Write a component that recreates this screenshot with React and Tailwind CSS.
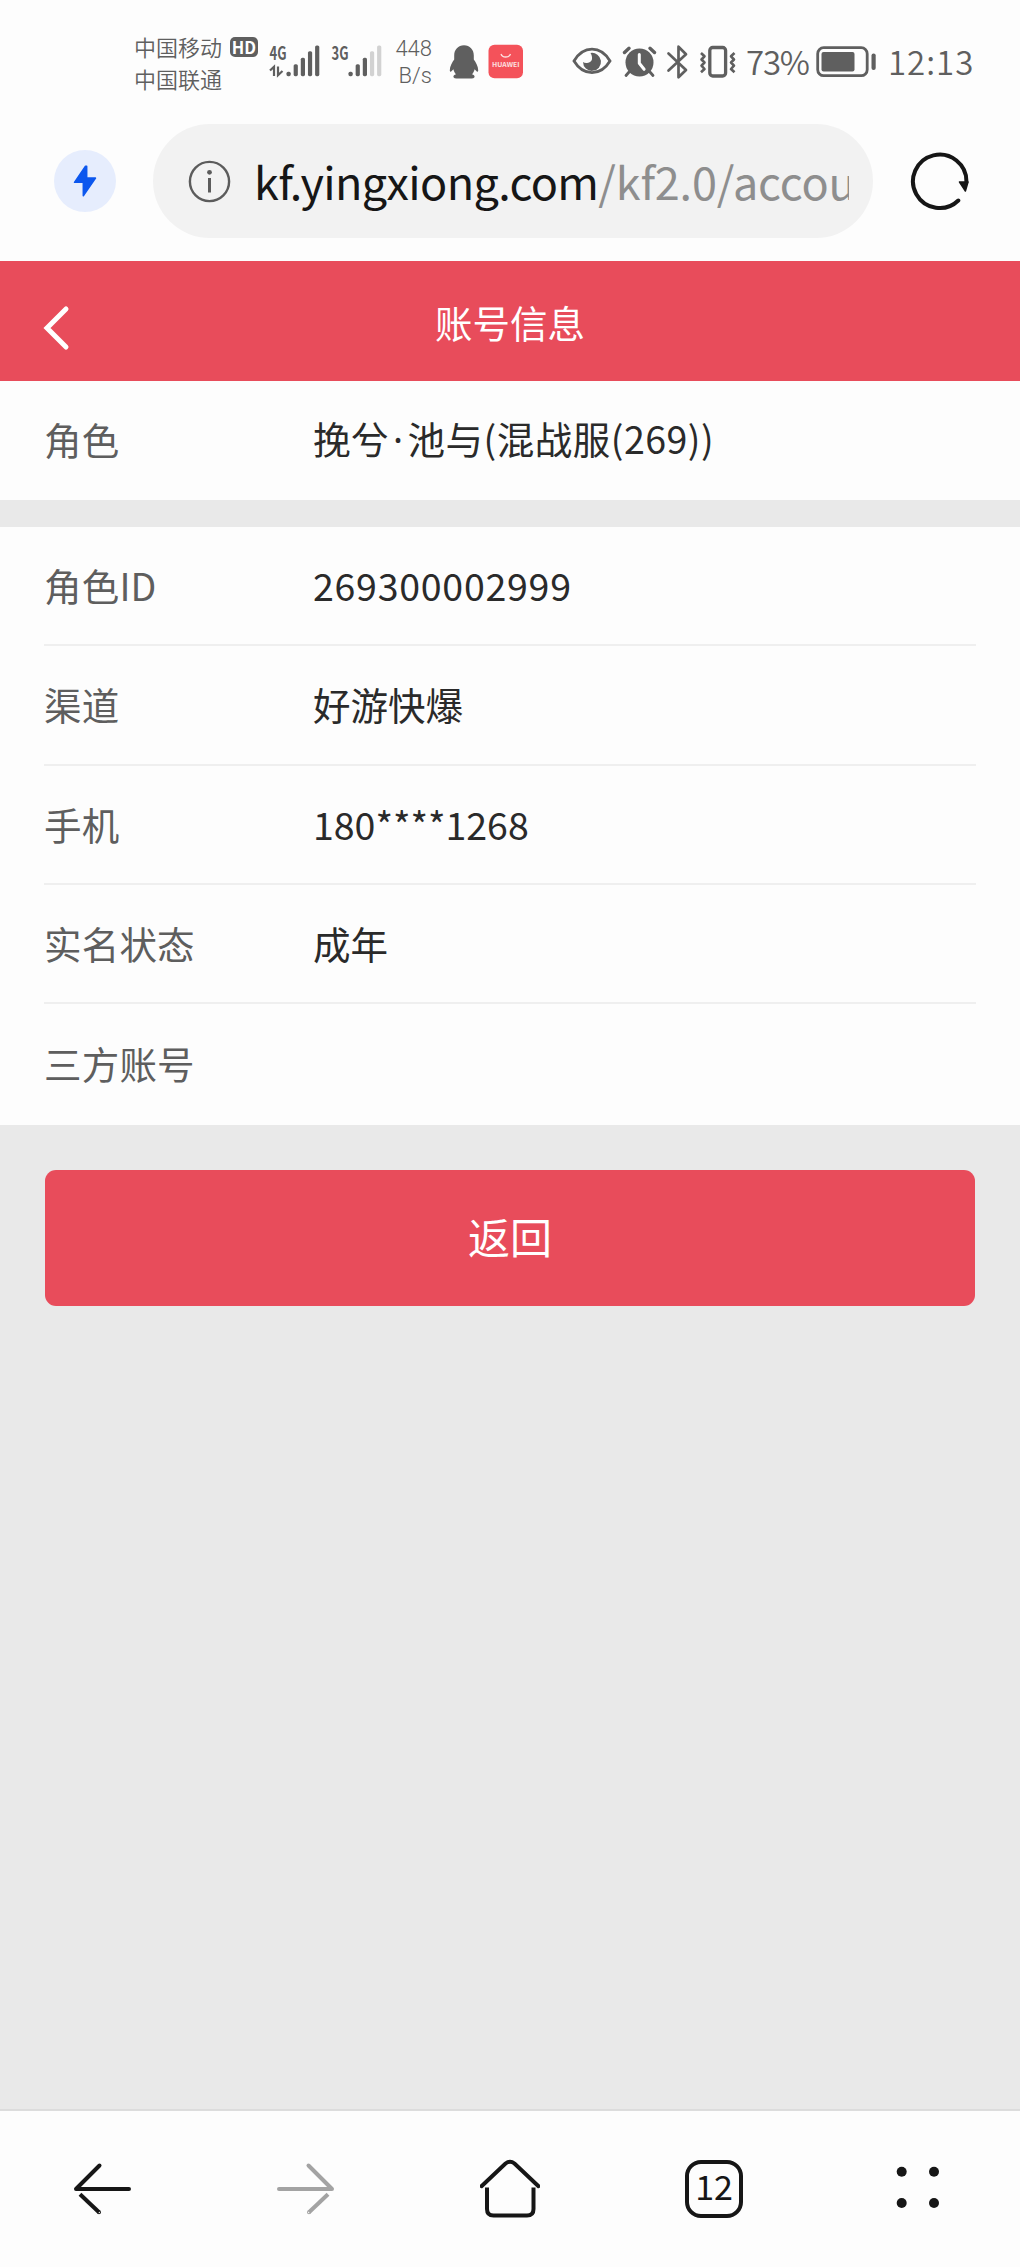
import React from 'react';

const SignalBars = ({ label, level, showData }) => (
  <svg className="overflow-visible" width="54" height="36" viewBox="0 0 54 36" fill="#5f5f5f">
    <text x="1.5" y="15.5" fontSize="18.5" fontWeight="700" textLength="17" lengthAdjust="spacingAndGlyphs">
      {label}
    </text>
    {showData && (
      <g stroke="#5f5f5f" strokeWidth="2.2" fill="none">
        <path d="M2 26.5L6 22.8V32" />
        <path d="M10 22.5V31.2L14.5 27" />
      </g>
    )}
    {[4.5, 12, 18.5, 25, 30.7].map((height, index) => (
      <rect
        key={index}
        x={18.5 + index * 7.15}
        y={32.2 - height}
        width="4.2"
        height={height}
        rx="1.6"
        fill={index < level ? '#5f5f5f' : '#d2d2d2'}
      />
    ))}
  </svg>
);

const PenguinIcon = () => (
  <svg width="30" height="36" viewBox="0 0 30 36" fill="#5f5f5f">
    <path d="M15 1.2c-5.800 0-9.800 4.300-9.800 10.200v4.200C3.200 18.500.8 22.500.8 26.200c0 1.600.9 1.900 1.900.9l1.700-1.800c.5 2 1.300 3.600 2.600 5-1.800.5-2.600 1.400-2.600 2.400 0 1.300 1.800 1.900 5 1.900h11.200c3.200 0 5-.6 5-1.900 0-1-.8-1.900-2.600-2.400 1.300-1.400 2.100-3 2.600-5l1.700 1.800c1 1 1.900.7 1.900-.9 0-3.700-2.400-7.700-4.400-10.600v-4.200C24.800 5.500 20.800 1.200 15 1.200z" />
  </svg>
);

const HuaweiIcon = () => (
  <svg width="36" height="36" viewBox="0 0 36 36">
    <rect x="0.5" y="0.8" width="34.5" height="33.5" rx="6" fill="#f4525a" />
    <path d="M13 10c1.200 4 8.300 4 9.500 0" fill="none" stroke="#fde0e0" strokeWidth="1.300" />
    <text x="4" y="22.5" fontSize="6.5" fontWeight="700" fill="#fde0e0" textLength="27.5" lengthAdjust="spacingAndGlyphs">
      HUAWEI
    </text>
  </svg>
);

const EyeIcon = () => (
  <svg width="40" height="28" viewBox="0 0 40 28">
    <path d="M2 14C6.500 6.500 13 2.200 20 2.200S33.500 6.500 38 14c-4.500 7.500-11 11.600-18 11.600S6.500 21.500 2 14z" fill="none" stroke="#5f5f5f" strokeWidth="2.800" />
    <path d="M18.500 6A9 9 0 1 1 11 15c2.500 2.200 8.500.8 9-3 .2-2-.2-4.200-1.500-6z" fill="#5f5f5f" />
  </svg>
);

const AlarmIcon = () => (
  <svg width="36" height="32" viewBox="0 0 36 32">
    <circle cx="17.5" cy="16.5" r="14" fill="#5f5f5f" />
    <path d="M2.500 6.500L7 2.300M32.500 6.500L28 2.300" stroke="#5f5f5f" strokeWidth="3.400" strokeLinecap="round" />
    <path d="M7.500 25.500L4 29.500M27.500 25.500L31 29.500" stroke="#5f5f5f" strokeWidth="2.800" strokeLinecap="round" />
    <path d="M17.300 8.500v8.800l4.800 6" fill="none" stroke="#fdfdfd" strokeWidth="3" strokeLinecap="round" strokeLinejoin="round" />
  </svg>
);

const BluetoothIcon = () => (
  <svg width="24" height="36" viewBox="0 0 24 36" fill="none" stroke="#5f5f5f" strokeWidth="2.700" strokeLinecap="round" strokeLinejoin="round">
    <path d="M2.500 9.500L20 26l-7.500 7.300V2.700L20 10.200 2.500 26.500" />
  </svg>
);

const VibrateIcon = () => (
  <svg width="40" height="34" viewBox="0 0 40 34" fill="none" stroke="#5f5f5f">
    <rect x="11.8" y="2.5" width="15.8" height="28.5" rx="3" strokeWidth="3.300" />
    <path d="M3 8l3.500 3.300L3.500 14.500l3 3-3 3.200L6.500 24 3 27.300M36.500 8L33 11.300l3 3.200-3 3 3 3.200L33 24l3.500 3.300" strokeWidth="2.600" strokeLinejoin="round" />
  </svg>
);

const BatteryIcon = () => (
  <svg width="62" height="34" viewBox="0 0 62 34">
    <rect x="1.7" y="2.7" width="49.5" height="28" rx="6" fill="none" stroke="#5f5f5f" strokeWidth="2.800" />
    <rect x="5.5" y="7" width="33" height="19.5" rx="2" fill="#5f5f5f" />
    <rect x="55.5" y="8.5" width="4.2" height="16.5" rx="2" fill="#5f5f5f" />
  </svg>
);

const StatusBar = () => (
  <div className="flex h-[124px] shrink-0 pt-[30px] text-[#5f5f5f]">
    <div className="ml-[134px] w-[90px] text-[22px] leading-8 font-[350] whitespace-nowrap">
      <p>中国移动</p>
      <p>中国联通</p>
    </div>
    <div className="mt-[7px] ml-[6px] flex h-5 w-7 items-center justify-center rounded-[5px] bg-[#5f5f5f] pb-px text-[16.500px] leading-5 font-bold text-white">
      HD
    </div>
    <div className="mt-[14px] ml-[10px] w-[54px]"><SignalBars label="4G" level={5} showData /></div>
    <div className="mt-[14px] ml-2 w-[54px]"><SignalBars label="3G" level={3} /></div>
    <div className="mt-[5px] ml-[8px] w-[41px] pr-px text-right font-['Roboto',sans-serif] text-[22px] leading-[27px] font-light">
      <p>448</p>
      <p>B/s</p>
    </div>
    <div className="mt-[14px] ml-[16px]"><PenguinIcon /></div>
    <div className="mt-[14px] ml-[9px]"><HuaweiIcon /></div>
    <div className="mt-[17px] ml-[48px]"><EyeIcon /></div>
    <div className="mt-[16px] ml-[10px]"><AlarmIcon /></div>
    <div className="mt-[14px] ml-[8px]"><BluetoothIcon /></div>
    <div className="mt-[15px] ml-[8px]"><VibrateIcon /></div>
    <p className="mt-2 ml-[8px] w-[68px] text-[33px] leading-[46px] font-[350] tracking-[-1.200px]">73%</p>
    <div className="mt-[15px] ml-[2px]"><BatteryIcon /></div>
    <p className="mt-2 ml-[10px] text-[33px] leading-[46px] font-[350] tracking-[1px]">12:13</p>
  </div>
);

const AddressBar = () => (
  <div className="flex h-[137px] shrink-0 items-start">
    <div className="mt-[26px] ml-[54px] flex size-[62px] items-center justify-center rounded-full bg-[#e6edfd]">
      <svg width="24" height="34" viewBox="0 0 24 34">
        <path d="M12.500 2.200L1.500 18.300h8.800v13.500L22.500 14h-8.800V2.200z" fill="#0c57ee" stroke="#0c57ee" strokeWidth="1.500" strokeLinejoin="round" />
      </svg>
    </div>
    <div className="ml-[37px] flex h-[114px] w-[720px] items-center rounded-full bg-[#f2f2f2] pr-[22px] pl-[35px]">
      <svg className="shrink-0" width="43" height="43" viewBox="0 0 43 43">
        <circle cx="21.5" cy="21.5" r="19.6" fill="none" stroke="#5c5c5c" strokeWidth="2.400" />
        <circle cx="21.5" cy="12.3" r="2.4" fill="#5c5c5c" />
        <path d="M21.500 18v14.500" stroke="#5c5c5c" strokeWidth="3" />
      </svg>
      <p className="ml-[23px] w-[595px] overflow-hidden text-[45px] leading-[70px] tracking-[-0.650px] whitespace-nowrap text-[#161616]">
        kf.yingxiong.com<span className="tracking-[-0.200px] text-[#8e8e8e]">/kf2.0/accou</span>
      </p>
    </div>
    <svg className="mt-[27px] ml-[37px]" width="60" height="60" viewBox="0 0 60 60">
      <path d="M48.300 49.500A26.700 26.700 0 1 1 56.400 31" fill="none" stroke="#161616" strokeWidth="4" strokeLinecap="round" />
      <path d="M49.500 31h8.500l-2.600 9z" fill="#161616" stroke="#161616" strokeWidth="1.500" strokeLinejoin="round" />
    </svg>
  </div>
);

const InfoRow = ({ label, value }) => (
  <div className="flex h-[119.3px] items-center pb-px text-[37.500px]">
    <span className="w-[269px] tracking-[0.200px] text-[#5e5e5e]">{label}</span>
    <span className="text-[#2a2a2a]">{value}</span>
  </div>
);

const NavBar = () => (
  <div className="grid h-[158px] shrink-0 grid-cols-5 place-items-center border-t-2 border-[#dcdcdc] bg-[#fdfdfd]">
    <svg width="60" height="60" viewBox="0 0 60 60" fill="none" stroke="#161616" strokeWidth="4">
      <path d="M57 30H4L27.500 6.500" strokeLinecap="round" strokeLinejoin="round" />
      <path d="M8 35.200L27 53.200" />
      <circle cx="27" cy="53.2" r="0.5" strokeWidth="3" />
    </svg>
    <svg width="60" height="60" viewBox="0 0 60 60" fill="none" stroke="#a3a3a3" strokeWidth="4">
      <path d="M3 30h53L32.500 6.500" strokeLinecap="round" strokeLinejoin="round" />
      <path d="M52 35.200L33 53.200" />
      <circle cx="33" cy="53.2" r="0.5" strokeWidth="3" />
    </svg>
    <svg width="60" height="60" viewBox="0 0 60 60" fill="none" stroke="#161616" strokeWidth="4">
      <path d="M1.500 27.200L25.500 4.500q4.500-3.500 9 0L58.500 27.200" strokeLinecap="round" />
      <path d="M7 28.500V50q0 6.500 6.500 6.500h33.500q6.500 0 6.500-6.500V28.500" />
    </svg>
    <div className="flex size-[58px] items-center justify-center rounded-[16px] border-4 border-[#161616] pb-[7px] text-[34px] leading-[43px] text-[#161616]">
      12
    </div>
    <svg width="60" height="60" viewBox="0 0 60 60" fill="#161616">
      <circle cx="13.7" cy="12.7" r="5" />
      <circle cx="46" cy="12.7" r="5" />
      <circle cx="13.7" cy="44" r="5" />
      <circle cx="46" cy="44" r="5" />
    </svg>
  </div>
);

const App = () => {
  const roleName = (
    <span className="tracking-[0.500px]">
      挽兮<span className="px-1 font-['Noto_Sans',sans-serif]">·</span>池与(混战服(269))
    </span>
  );

  const accountInfo = [
    { label: '角色ID', value: <span className="tracking-[0.750px]">269300002999</span> },
    { label: '渠道', value: '好游快爆' },
    { label: '手机', value: '180****1268' },
    { label: '实名状态', value: '成年' },
    { label: '三方账号', value: '' },
  ];

  return (
    <div className="flex h-[2267px] w-[1020px] flex-col overflow-hidden bg-[#fdfdfd] font-['Noto_Sans_CJK_SC',sans-serif]">
      <StatusBar />
      <AddressBar />

      {/* Page header */}
      <div className="grid h-[120px] shrink-0 grid-cols-3 items-center bg-[#e84c5b] px-[42px]">
        <svg className="mt-[13px]" width="28" height="46" viewBox="0 0 28 46" fill="none" stroke="#fff" strokeWidth="5">
          <path d="M24 4L5 23l19 19" strokeLinecap="round" />
        </svg>
        <h1 className="pt-0.5 text-center text-[37.500px] text-white">账号信息</h1>
      </div>

      {/* Account details */}
      <div className="flex flex-1 flex-col bg-[#e9e9e9]">
        <div className="flex h-[119px] items-end bg-[#fdfdfd] px-[44px] pb-px">
          <InfoRow label="角色" value={roleName} />
        </div>
        <div className="mt-[27px] h-[598px] divide-y-2 divide-[#efefef] bg-[#fdfdfd] px-[44px]">
          {accountInfo.map((item) => (
            <InfoRow key={item.label} {...item} />
          ))}
        </div>
        <button className="mx-[45px] mt-[45px] h-[136px] rounded-[11px] bg-[#e84c5b] pb-[5px] text-[42px] text-white">
          返回
        </button>
      </div>

      <NavBar />
    </div>
  );
};

export default App;
